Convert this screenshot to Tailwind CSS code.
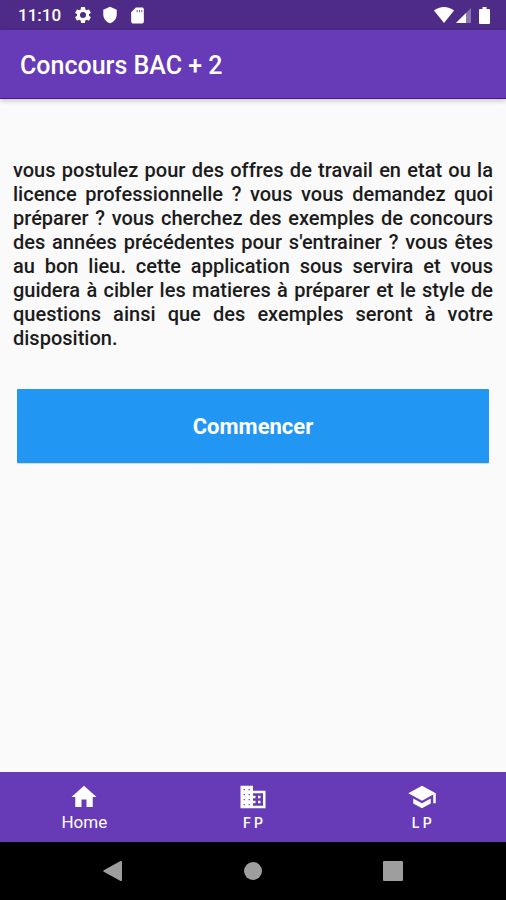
<!DOCTYPE html>
<html lang="fr">
<head>
<meta charset="utf-8">
<meta name="viewport" content="width=device-width, initial-scale=1">
<title>Concours BAC + 2</title>
<script src="https://cdn.jsdelivr.net/npm/@tailwindcss/browser@4"></script>
</head>
<body class="flex min-h-screen flex-col bg-[#fafafa] font-['Roboto',sans-serif] text-white">
  <div class="flex h-[30px] items-center justify-between bg-[#4e2b87] pr-4 pl-[18px]">
    <div class="flex items-center">
      <span class="text-[17px] leading-5 font-medium">11:10</span>
      <svg class="ml-3 size-5" viewBox="0 0 24 24" fill="currentColor" aria-hidden="true"><path d="M19.14 12.94c.04-.3.06-.61.06-.94 0-.32-.02-.64-.07-.94l2.03-1.58a.49.49 0 0 0 .12-.61l-1.92-3.32a.488.488 0 0 0-.59-.22l-2.39.96c-.5-.38-1.03-.7-1.62-.94l-.36-2.54a.484.484 0 0 0-.48-.41h-3.84c-.24 0-.43.17-.47.41l-.36 2.54c-.59.24-1.13.57-1.62.94l-2.39-.96c-.22-.08-.47 0-.59.22L2.74 8.87c-.12.21-.08.47.12.61l2.03 1.58c-.05.3-.09.63-.09.94s.02.64.07.94l-2.03 1.58a.49.49 0 0 0-.12.61l1.92 3.32c.12.22.37.29.59.22l2.39-.96c.5.38 1.03.7 1.62.94l.36 2.54c.05.24.24.41.48.41h3.84c.24 0 .44-.17.47-.41l.36-2.54c.59-.24 1.13-.56 1.62-.94l2.39.96c.22.08.47 0 .59-.22l1.92-3.32c.12-.22.07-.47-.12-.61l-2.01-1.58zM12 15.6A3.6 3.6 0 1 1 12 8.4a3.6 3.6 0 0 1 0 7.2z"/></svg>
      <svg class="ml-2 size-[18px]" viewBox="0 0 24 24" fill="currentColor" aria-hidden="true"><path d="M12 1 3 5v6c0 5.55 3.84 10.74 9 12 5.16-1.26 9-6.45 9-12V5z"/></svg>
      <svg class="ml-[9px] size-[19px]" viewBox="0 0 24 24" fill="currentColor" aria-hidden="true"><path d="M18 2h-8L4 8v12c0 1.100.9 2 2 2h12c1.100 0 2-.9 2-2V4c0-1.100-.9-2-2-2zm-6 6h-1V5h1v3zm3 0h-1V5h1v3zm3 0h-1V5h1v3z"/></svg>
    </div>
    <div class="flex items-center">
      <svg class="h-4 w-5" viewBox="0 0 20 16" fill="currentColor" aria-hidden="true"><path d="M10 16 0 3.500C3 1.200 6.400 0 10 0s7 1.200 10 3.500z"/></svg>
      <svg class="ml-[2px] size-[15px]" viewBox="0 0 15 15" fill="currentColor" aria-hidden="true"><path fill-opacity=".35" d="M15 0v15H0z"/><path d="M10 5v10H0z"/></svg>
      <svg class="ml-[8px] h-[17px] w-[11px]" viewBox="0 0 11 17" fill="currentColor" aria-hidden="true"><path d="M3.500 0h4v2H10a1 1 0 0 1 1 1v13a1 1 0 0 1-1 1H1a1 1 0 0 1-1-1V3a1 1 0 0 1 1-1h2.500z"/></svg>
    </div>
  </div>
  <header class="flex h-[69px] items-center border-b border-[#4f1594] bg-[#673ab7] px-5 pt-1 shadow-[0_2px_5px_rgba(0,0,0,0.2)]">
    <h1 class="text-[25px] leading-8 font-medium">Concours BAC + 2</h1>
  </header>
  <main class="flex-1 px-[13px] pt-[59px]">
    <p class="text-justify text-xl leading-6 font-medium text-[#1c1c1c]">vous postulez pour des offres de travail en etat ou la licence professionnelle ? vous vous demandez quoi préparer ? vous cherchez des exemples de concours des années précédentes pour s'entrainer ? vous êtes au bon lieu. cette application sous servira et vous guidera à cibler les matieres à préparer et le style de questions ainsi que des exemples seront à votre disposition.</p>
    <div class="px-1 pt-[39px]">
      <button type="button" class="block h-[74px] w-full rounded-[1px] bg-[#2196f3] pt-[2px] text-[22px] leading-7 font-bold shadow-[0_1px_1px_rgba(0,0,0,0.15)]">Commencer</button>
    </div>
  </main>
  <nav class="grid h-[70px] grid-cols-3 bg-[#673ab7] pt-[10px]">
    <a href="#home" class="flex flex-col items-center">
      <svg class="size-[30px]" viewBox="0 0 24 24" fill="currentColor" aria-hidden="true"><path d="M10 20v-6h4v6h5v-8h3L12 3 2 12h3v8z"/></svg>
      <span class="text-[17px] leading-5">Home</span>
    </a>
    <a href="#fp" class="flex flex-col items-center">
      <svg class="size-[30px]" viewBox="0 0 24 24" fill="currentColor" aria-hidden="true"><path d="M12 7V3H2v18h20V7H12zM5.500 18.500h-1v-1h1v1zm0-4h-1v-1h1v1zm0-4h-1v-1h1v1zm0-4h-1v-1h1v1zm4 12h-1v-1h1v1zm0-4h-1v-1h1v1zm0-4h-1v-1h1v1zm0-4h-1v-1h1v1zM20 19h-8v-2h2v-2h-2v-2h2v-2h-2V9h8v10zm-2-8h-2v2h2v-2zm0 4h-2v2h2v-2z"/></svg>
      <span class="text-sm leading-[22px] font-medium">F P</span>
    </a>
    <a href="#lp" class="flex flex-col items-center">
      <svg class="size-[30px]" viewBox="0 0 24 24" fill="currentColor" aria-hidden="true"><path d="M5 13.180v4L12 21l7-3.820v-4L12 17l-7-3.820zM12 3 1 9l11 6 9-4.910V17h2V9L12 3z"/></svg>
      <span class="text-sm leading-[22px] font-medium">L P</span>
    </a>
  </nav>
  <div class="flex h-[58px] items-center justify-around bg-black px-[43px] text-[#9e9e9e]">
    <button type="button" aria-label="Retour"><svg class="size-5" viewBox="0 0 20 20" fill="currentColor" aria-hidden="true"><path d="M18 0a1 1 0 0 1 1 1v18a1 1 0 0 1-1.500.9L.8 10.800a1 1 0 0 1 0-1.600L17.500.1z"/></svg></button>
    <button type="button" aria-label="Accueil"><svg class="size-5" viewBox="0 0 20 20" fill="currentColor" aria-hidden="true"><circle cx="10" cy="10" r="9"/></svg></button>
    <button type="button" aria-label="Applications récentes"><svg class="size-5" viewBox="0 0 20 20" fill="currentColor" aria-hidden="true"><rect width="20" height="20" rx="1"/></svg></button>
  </div>
</body>
</html>
